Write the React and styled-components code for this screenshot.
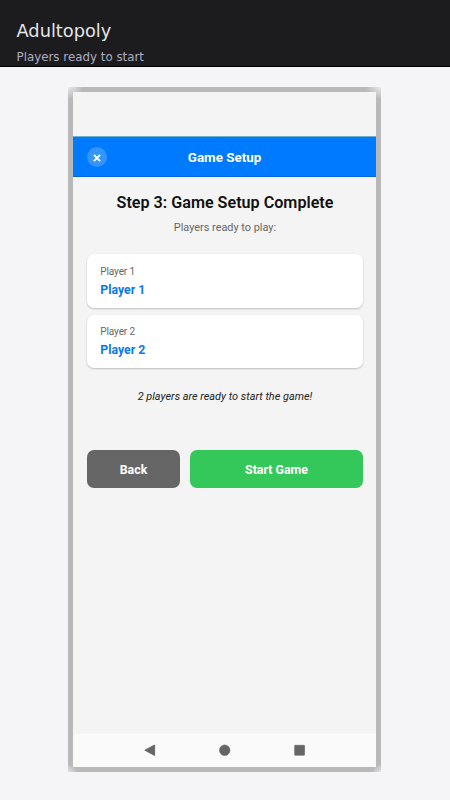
import React from 'react'
import styled, { createGlobalStyle } from 'styled-components'

const players = [
  { id: 1, label: 'Player 1', name: 'Player 1' },
  { id: 2, label: 'Player 2', name: 'Player 2' }
]

export default function App () {
  return (
    <>
      <GlobalStyle />
      <Page>
        <TopBar>
          <AppName>Adultopoly</AppName>
          <Caption>Players ready to start</Caption>
        </TopBar>
        <Stage>
          <Frame>
            <Screen>
              <StatusBar />
              <Header>
                <CloseButton aria-label='Close'>
                  <svg width='8' height='8' viewBox='0 0 8 8'>
                    <path d='M.9 .9 7.1 7.1M7.1 .9 .9 7.1' stroke='#fff' strokeWidth='2' />
                  </svg>
                </CloseButton>
                <HeaderTitle>Game Setup</HeaderTitle>
              </Header>
              <Content>
                <Title>Step 3: Game Setup Complete</Title>
                <Subtitle>Players ready to play:</Subtitle>
                <PlayerList>
                  {players.map(({ id, label, name }) => (
                    <PlayerCard key={id}>
                      <PlayerLabel>{label}</PlayerLabel>
                      <PlayerName>{name}</PlayerName>
                    </PlayerCard>
                  ))}
                </PlayerList>
                <Summary>{players.length} players are ready to start the game!</Summary>
                <Actions>
                  <Button $color='#666666'>Back</Button>
                  <Button $color='#34c759'>Start Game</Button>
                </Actions>
              </Content>
              <NavBar>
                <svg width='12' height='12' viewBox='0 0 12 12'>
                  <path d='M10.6 1v10.4L.8 6.2z' fill='#666' stroke='#5c5c5c' strokeWidth='.8' strokeLinejoin='round' />
                </svg>
                <svg width='12' height='12' viewBox='0 0 12 12'>
                  <circle cx='5.7' cy='6.2' r='5.2' fill='#666' stroke='#5c5c5c' strokeWidth='.6' />
                </svg>
                <svg width='12' height='12' viewBox='0 0 12 12'>
                  <rect x='.7' y='1.3' width='9.8' height='9.9' rx='.5' fill='#666' stroke='#5c5c5c' strokeWidth='.6' />
                </svg>
              </NavBar>
            </Screen>
          </Frame>
        </Stage>
      </Page>
    </>
  )
}

const GlobalStyle = createGlobalStyle`
  * {
    box-sizing: border-box;
  }
  body {
    margin: 0;
    background: #f5f5f7;
  }
  svg {
    display: block;
  }
`

const Page = styled.div`
  height: 800px;
  display: flex;
  flex-direction: column;
  background: #f5f5f7;
`

const TopBar = styled.header`
  height: 67px;
  padding: 20px 16.5px 0;
  background: #1c1c1e;
  border-bottom: 1px solid #000;
  font-family: 'DejaVu Sans', sans-serif;
`

const AppName = styled.h1`
  margin: 0;
  font-size: 17.8px;
  font-weight: normal;
  line-height: 21px;
  color: #e5e5ea;
`

const Caption = styled.p`
  margin: 9px 0 0;
  font-size: 11.85px;
  line-height: 15px;
  color: #aeaec0;
`

const Stage = styled.main`
  flex: 1;
  padding: 20px 69px 28px 68px;
  display: flex;
`

/* grey shadow edge that fades out in the corners */
const Frame = styled.div`
  flex: 1;
  padding: 5px;
  display: flex;
  background:
    radial-gradient(15px 12px at 0 0, #e9e9eb, rgba(185, 185, 186, 0)),
    radial-gradient(15px 12px at 100% 0, #e9e9eb, rgba(185, 185, 186, 0)),
    radial-gradient(9px 8px at 0 100%, #e2e2e4, rgba(185, 185, 186, 0)),
    radial-gradient(9px 8px at 100% 100%, #e2e2e4, rgba(185, 185, 186, 0)),
    #b9b9ba;
`

const Screen = styled.section`
  flex: 1;
  display: flex;
  flex-direction: column;
  background: #f4f4f4;
  font-family: Roboto, sans-serif;
`

const StatusBar = styled.div`
  height: 44px;
`

const Header = styled.div`
  height: 41px;
  padding: 0 14px;
  display: grid;
  grid-template-columns: 20px 1fr 20px;
  align-items: center;
  background: #007aff;
  border-top: 1px solid #6fb0c8;
  border-bottom: 1px solid #0067dc;
`

const CloseButton = styled.button`
  width: 20px;
  height: 20px;
  padding: 3px 0 0;
  border: 0;
  border-radius: 50%;
  display: flex;
  align-items: center;
  justify-content: center;
  background: #3395ff;
`

const HeaderTitle = styled.h2`
  margin: 0;
  padding-top: 2px;
  text-align: center;
  font-size: 13.4px;
  font-weight: 700;
  line-height: 16px;
  color: #fff;
`

const Content = styled.div`
  flex: 1;
  padding: 16px 13px 0 14px;
  display: flex;
  flex-direction: column;
`

const Title = styled.h3`
  margin: 0;
  text-align: center;
  font-size: 16.15px;
  font-weight: 600;
  line-height: 20px;
  color: #111;
`

const Subtitle = styled.p`
  margin: 7px 0 0;
  text-align: center;
  font-size: 10.9px;
  line-height: 16px;
  color: #666;
`

const PlayerList = styled.div`
  margin-top: 18.4px;
  display: flex;
  flex-direction: column;
  gap: 7px;
`

const PlayerCard = styled.div`
  height: 53.2px;
  padding: 10.7px 13.3px 0;
  border-radius: 7px;
  background: #fff;
  box-shadow: 0 1px 2px rgba(0, 0, 0, 0.22);
`

const PlayerLabel = styled.div`
  font-size: 10px;
  letter-spacing: -0.1px;
  line-height: 14px;
  color: #666;
`

const PlayerName = styled.div`
  margin-top: 3px;
  font-size: 12.3px;
  font-weight: 700;
  line-height: 16px;
  color: #0a78ee;
`

const Summary = styled.p`
  margin: 21px 0 0;
  text-align: center;
  font-size: 10.9px;
  font-style: italic;
  line-height: 16px;
  color: #222;
`

const Actions = styled.div`
  margin-top: 45.7px;
  display: grid;
  grid-template-columns: 93px 1fr;
  gap: 10px;
`

const Button = styled.button`
  height: 37.3px;
  padding: 1px 0 0;
  border: 0;
  border-radius: 7px;
  background: ${({ $color }) => $color};
  font-family: inherit;
  font-size: 12.35px;
  font-weight: 700;
  color: #fff;
`

const NavBar = styled.nav`
  height: 33px;
  padding-bottom: 1px;
  display: flex;
  align-items: center;
  justify-content: center;
  gap: 63px;
  background: #fafafa;
`
